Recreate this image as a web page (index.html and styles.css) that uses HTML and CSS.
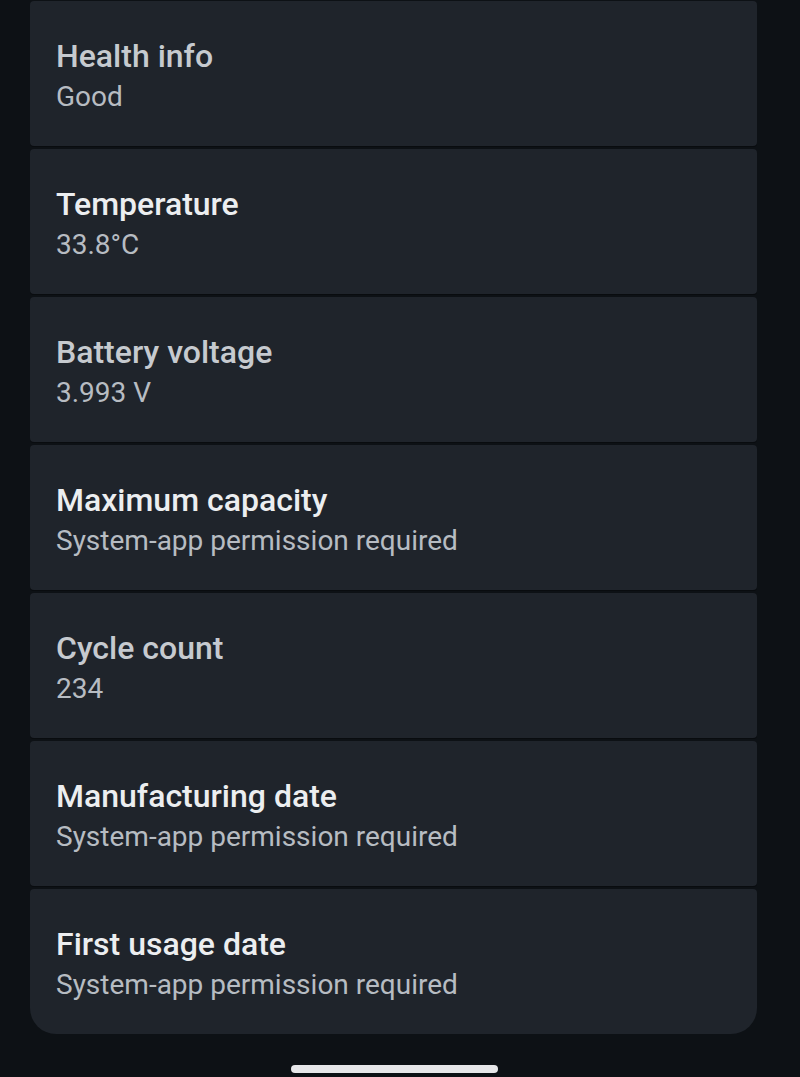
FILE: index.html
```html
<!DOCTYPE html>
<html lang="en">
<head>
<meta charset="utf-8">
<title>Battery info</title>
<link rel="stylesheet" href="styles.css">
</head>
<body>
<main class="screen">
  <section class="list">
    <div class="card">
      <div class="title dim">Health info</div>
      <div class="value">Good</div>
    </div>
    <div class="card">
      <div class="title">Temperature</div>
      <div class="value">33.8°C</div>
    </div>
    <div class="card">
      <div class="title dim">Battery voltage</div>
      <div class="value">3.993 V</div>
    </div>
    <div class="card">
      <div class="title">Maximum capacity</div>
      <div class="value">System-app permission required</div>
    </div>
    <div class="card">
      <div class="title dim">Cycle count</div>
      <div class="value">234</div>
    </div>
    <div class="card">
      <div class="title">Manufacturing date</div>
      <div class="value">System-app permission required</div>
    </div>
    <div class="card last">
      <div class="title">First usage date</div>
      <div class="value">System-app permission required</div>
    </div>
  </section>
  <div class="nav">
    <div class="handle"></div>
  </div>
</main>
</body>
</html>
```
FILE: styles.css
```css
html, body {
  margin: 0;
  padding: 0;
  background: #0d1115;
}
body {
  font-family: Roboto, "Noto Sans", "Liberation Sans", sans-serif;
  width: 800px;
  height: 1077px;
  overflow: hidden;
}
.screen {
  display: flex;
  flex-direction: column;
  height: 1077px;
}
.list {
  display: flex;
  flex-direction: column;
  gap: 3px;
  padding: 1px 43px 0 30px;
  background: #0d1115;
}
.card {
  box-sizing: border-box;
  height: 145px;
  background: #1f242b;
  border-radius: 4px;
  padding: 35px 26px 0 26px;
  display: flex;
  flex-direction: column;
  box-shadow: 0 1px 0 #090c0f;
}
.card.last {
  border-radius: 4px 4px 26px 26px;
  box-shadow: none;
}
.title {
  font-size: 32px;
  line-height: 40px;
  font-weight: 500;
  color: #eceef0;
}
.title.dim {
  color: #c6cacf;
}
.value {
  margin-top: 3px;
  font-size: 28px;
  line-height: 36px;
  font-weight: 400;
  color: #b7bcc2;
}
.nav {
  flex: 1;
  display: flex;
  justify-content: center;
  align-items: flex-end;
  padding-bottom: 4px;
}
.handle {
  width: 207px;
  height: 8px;
  border-radius: 4px;
  background: #e6e7e9;
  margin-left: -12px;
}
```
